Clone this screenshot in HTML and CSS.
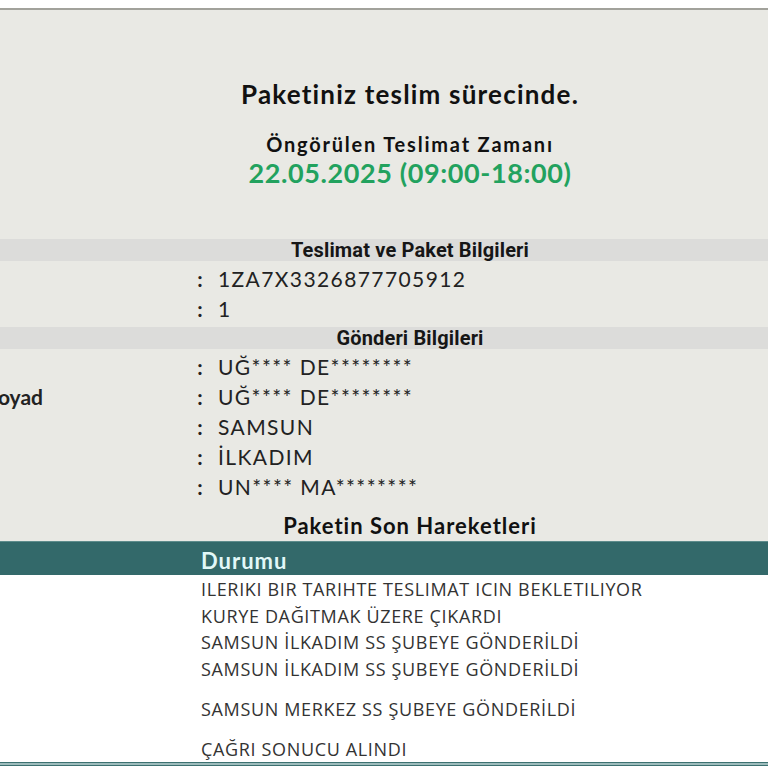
FILE: index.html
```html
<!DOCTYPE html>
<html lang="tr">
<head>
<meta charset="utf-8">
<title>Kargo Takip</title>
<link rel="stylesheet" href="styles.css">
</head>
<body>
<div class="page">
  <div class="panel">
    <div class="wrap">
      <div class="hero">
        <h1 class="hero-title">Paketiniz teslim sürecinde.</h1>
        <div class="hero-sub">Öngörülen Teslimat Zamanı</div>
        <div class="hero-date">22.05.2025 (09:00-18:00)</div>
      </div>

      <div class="band">Teslimat ve Paket Bilgileri</div>
      <div class="info">
        <div class="info-row"><span class="lbl lbl-off">Gönderi No</span><span class="colon">:</span><span class="val">1ZA7X3326877705912</span></div>
        <div class="info-row"><span class="lbl lbl-off">Parça Sayısı</span><span class="colon">:</span><span class="val">1</span></div>
      </div>

      <div class="band">Gönderi Bilgileri</div>
      <div class="info">
        <div class="info-row"><span class="lbl lbl-off">Gönderen</span><span class="colon">:</span><span class="val">UĞ**** DE********</span></div>
        <div class="info-row"><span class="lbl">Alıcı Ad Soyad</span><span class="colon">:</span><span class="val">UĞ**** DE********</span></div>
        <div class="info-row"><span class="lbl lbl-off">İl</span><span class="colon">:</span><span class="val">SAMSUN</span></div>
        <div class="info-row"><span class="lbl lbl-off">İlçe</span><span class="colon">:</span><span class="val">İLKADIM</span></div>
        <div class="info-row"><span class="lbl lbl-off">Teslim Alan</span><span class="colon">:</span><span class="val">UN**** MA********</span></div>
      </div>

      <h2 class="moves-title">Paketin Son Hareketleri</h2>
    </div>
  </div>

  <div class="moves">
    <div class="wrap">
      <div class="mrow mhead"><span class="mcell-side"></span><span class="mcell">Durumu</span></div>
      <div class="mrow"><span class="mcell-side"></span><span class="mcell">ILERIKI BIR TARIHTE TESLIMAT ICIN BEKLETILIYOR</span></div>
      <div class="mrow r27"><span class="mcell-side"></span><span class="mcell">KURYE DAĞITMAK ÜZERE ÇIKARDI</span></div>
      <div class="mrow"><span class="mcell-side"></span><span class="mcell">SAMSUN İLKADIM SS ŞUBEYE GÖNDERİLDİ</span></div>
      <div class="mrow r27"><span class="mcell-side"></span><span class="mcell">SAMSUN İLKADIM SS ŞUBEYE GÖNDERİLDİ</span></div>
      <div class="mrow tall"><span class="mcell-side"></span><span class="mcell">SAMSUN MERKEZ SS ŞUBEYE GÖNDERİLDİ</span></div>
      <div class="mrow"><span class="mcell-side"></span><span class="mcell">ÇAĞRI SONUCU ALINDI</span></div>
    </div>
  </div>
  <div class="foot"></div>
</div>
</body>
</html>
```

FILE: styles.css
```css
html, body {
  margin: 0;
  padding: 0;
  background: #ffffff;
  overflow: hidden;
}

.page {
  padding-top: 8px;
  width: 768px;
  overflow: hidden;
}

.wrap {
  width: 1000px;
  margin-left: -90px;
}

.panel {
  background: #e9e9e4;
  border-top: 2px solid #a2a29b;
}

.hero {
  text-align: center;
  padding-top: 69px;
  padding-bottom: 50px;
  color: #111111;
}

.hero-title {
  margin: 0;
  font-family: "Lato", "Noto Sans", sans-serif;
  font-weight: 700;
  font-size: 26px;
  line-height: 31px;
  letter-spacing: 1.2px;
}

.hero-sub {
  margin-top: 22px;
  font-family: "Lato", "Noto Sans", sans-serif;
  font-weight: 700;
  font-size: 20px;
  line-height: 24px;
  letter-spacing: 1.8px;
}

.hero-date {
  margin-top: 1px;
  font-family: "Lato", "Noto Sans", sans-serif;
  font-weight: 700;
  font-size: 27px;
  line-height: 32px;
  letter-spacing: 0.6px;
  color: #22a25e;
}

.band {
  background: #dcdcda;
  height: 22px;
  line-height: 23px;
  text-align: center;
  font-family: "Roboto", sans-serif;
  font-weight: 700;
  font-size: 20px;
  letter-spacing: 0.15px;
  color: #161616;
}

.info {
  padding: 2px 0 4px;
}

.info-row {
  display: grid;
  grid-template-columns: 280px 20px 1fr;
  height: 30px;
  align-items: center;
  font-family: "Lato", "Noto Sans", sans-serif;
  font-size: 21px;
  color: #222;
}

.lbl {
  font-weight: 700;
}

.lbl-off {
  visibility: hidden;
}

.colon {
  text-align: center;
  font-weight: 700;
}

.val {
  padding-left: 8px;
  letter-spacing: 1.4px;
}

.moves-title {
  margin: 0;
  padding: 8px 0 2px;
  text-align: center;
  font-family: "Lato", "Noto Sans", sans-serif;
  font-weight: 700;
  font-size: 22px;
  line-height: 26px;
  letter-spacing: 1px;
  color: #111111;
}

.moves {
  background: #ffffff;
  border-top: 1px solid #5e8c8c;
}

.mrow {
  display: grid;
  grid-template-columns: 291px 1fr;
  height: 26px;
  align-items: center;
  font-family: "Open Sans", sans-serif;
  font-size: 18px;
  letter-spacing: 0.65px;
  color: #333;
}

.mrow.r27 { height: 27px; }
.mrow.tall { height: 54px; }

.mhead {
  background: #33696a;
  height: 30px;
  padding-top: 3px;
  margin-bottom: 1px;
  color: #e2f8f8;
  font-family: "Lato", "Noto Sans", sans-serif;
  font-weight: 700;
  font-size: 22px;
  letter-spacing: 1px;
}

.foot {
  border-top: 1px solid #3d7171;
  height: 2px;
  background: #9dbcbc;
  border-bottom: 1px solid #3d7171;
  box-shadow: 0 3px 0 #e6e6e2;
}
```
